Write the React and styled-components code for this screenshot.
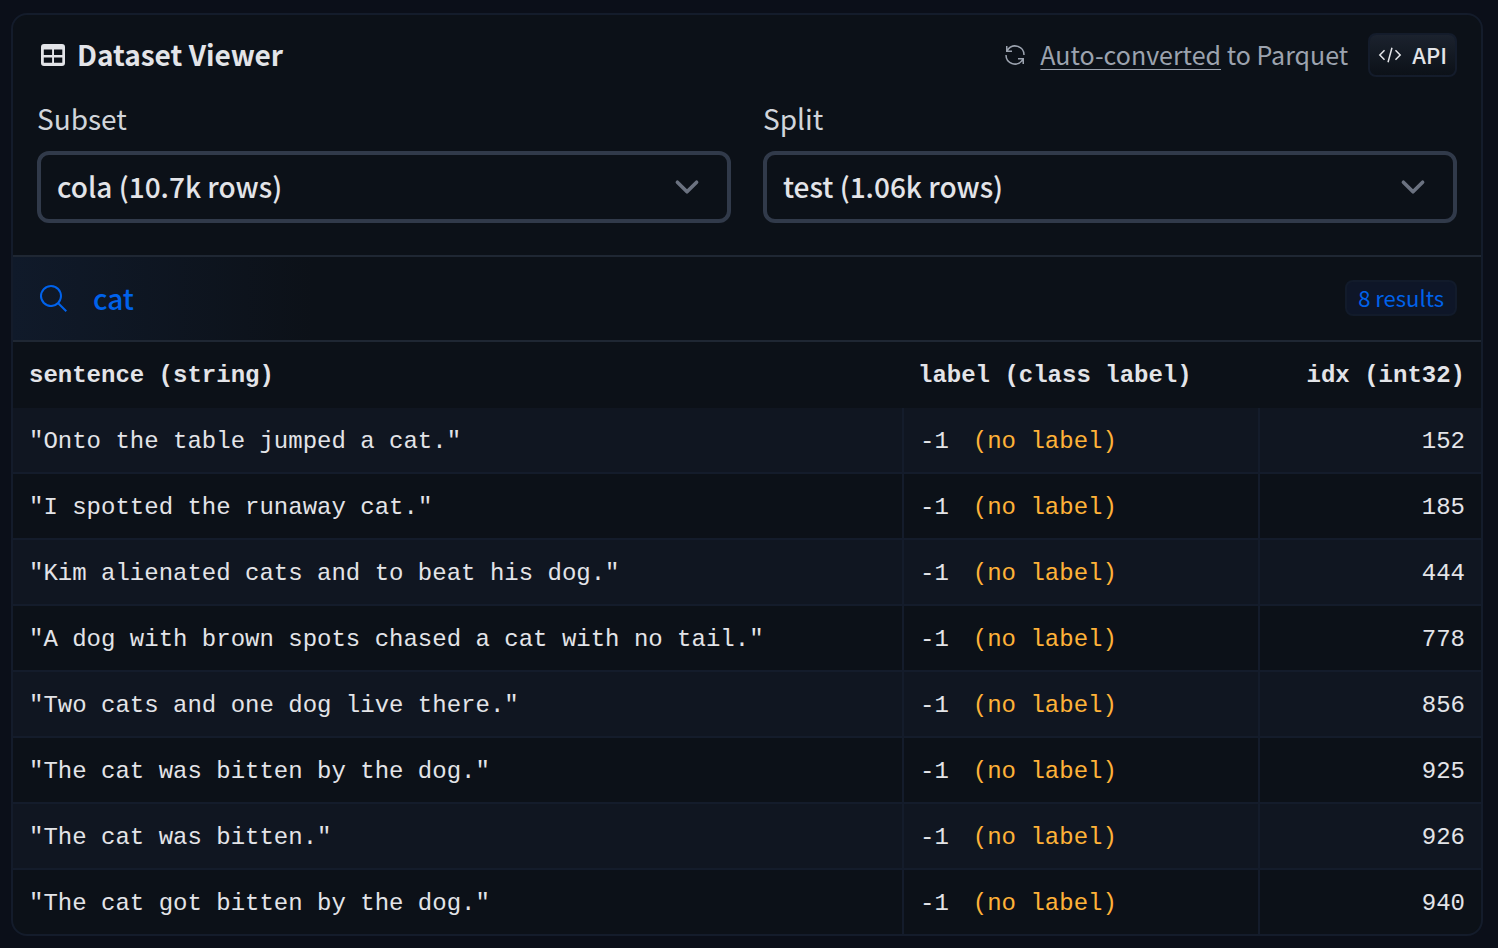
import React from "react";
import styled, { createGlobalStyle } from "styled-components";

const colors = {
    page: "#0b0f19",
    card: "#0c1118",
    stripe: "#101621",
    line: "#141c2b",
    divider: "#1f2733",
    field: "#313a4a",
    text: "#e3e4e8",
    label: "#d1d5db",
    muted: "#9ca3af",
    grey: "#6b7280",
    blue: "#0062eb",
    orange: "#ffb238"
};

const sans = `"Noto Sans CJK SC", "Open Sans", sans-serif`;
const mono = `"Liberation Mono", monospace`;

const GlobalStyle = createGlobalStyle`
    * {
        box-sizing: border-box;
    }
    body {
        margin: 0;
        background: ${colors.page};
        color: ${colors.text};
        font-family: ${sans};
    }
`;

const Card = styled.main`
    margin: 13px 15px 12px 11px;
    border: 2px solid ${colors.line};
    border-radius: 16px;
    background: ${colors.card};
    overflow: hidden;
`;
const Header = styled.header`
    display: flex;
    align-items: center;
    padding: 18px 24px 0;
    height: 62px;
`;
const HeaderText = styled.span`
    padding-bottom: 2px;
`;
const Title = styled.h1`
    display: flex;
    align-items: center;
    gap: 12px;
    margin: 0;
    padding-left: 4px;
    font-size: 28px;
    line-height: 40px;
    font-weight: 700;
`;
const Converted = styled.div`
    display: flex;
    align-items: center;
    gap: 13px;
    margin-left: auto;
    color: ${colors.muted};
    font-size: 25px;
    line-height: 40px;
`;
const ConvertedLink = styled.a`
    color: inherit;
    text-underline-offset: 4px;
    text-decoration-thickness: 1px;
`;
const ApiButton = styled.button`
    display: flex;
    align-items: center;
    gap: 10px;
    height: 44px;
    margin-left: 20px;
    padding: 0 8px;
    border: 2px solid ${colors.line};
    border-radius: 8px;
    background: linear-gradient(to bottom, #1b222e, #0c1118);
    color: ${colors.text};
    font-family: inherit;
    font-size: 22px;
    font-weight: 500;
`;

const Filters = styled.div`
    display: grid;
    grid-template-columns: 1fr 1fr;
    gap: 32px;
    padding: 21px 24px 32px;
`;
const Field = styled.label`
    display: flex;
    flex-direction: column;
    gap: 13px;
    color: ${colors.label};
    font-size: 28px;
    line-height: 40px;
`;
const SelectBox = styled.div`
    position: relative;
    svg {
        position: absolute;
        top: 12px;
        right: 20px;
        pointer-events: none;
    }
`;
const Select = styled.select`
    display: block;
    appearance: none;
    width: 100%;
    height: 72px;
    padding: 0 16px 2px;
    border: 4px solid ${colors.field};
    border-radius: 12px;
    background: ${colors.card};
    color: ${colors.text};
    font-family: inherit;
    font-size: 28px;
    font-weight: 500;
`;

const SearchBar = styled.div`
    display: flex;
    align-items: center;
    height: 87px;
    padding: 0 24px 2px;
    border-top: 2px solid ${colors.divider};
    border-bottom: 2px solid ${colors.divider};
    background: linear-gradient(to right, #101a2a, #0c1118 300px);
`;
const SearchInput = styled.input`
    flex: 1;
    min-width: 0;
    height: 48px;
    padding: 0 24px;
    border: none;
    outline: none;
    background: none;
    color: ${colors.blue};
    font-family: inherit;
    font-size: 28px;
    font-weight: 500;
`;
const Results = styled.span`
    height: 36px;
    padding: 0 11px;
    border: 2px solid #121b2b;
    border-radius: 8px;
    background: #0e1628;
    color: ${colors.blue};
    font-size: 22px;
    line-height: 30px;
`;

const Table = styled.table`
    width: 100%;
    table-layout: fixed;
    border-collapse: separate;
    border-spacing: 0;
    font-family: ${mono};
    font-size: 24px;
    line-height: 32px;
`;
const HeadCell = styled.th`
    width: ${({ $width }) => $width || "auto"};
    height: 66px;
    padding: 2px 16px 0;
    text-align: ${({ $align }) => $align || "left"};
    white-space: nowrap;
`;
const Row = styled.tr`
    &:nth-child(odd) {
        background: ${colors.stripe};
    }
    &:last-child td {
        height: 64px;
        border-bottom: none;
    }
`;
const Cell = styled.td`
    height: 66px;
    padding: 4px 16px 0;
    border-bottom: 2px solid ${colors.line};
    text-align: ${({ $align }) => $align || "left"};
    & + & {
        border-left: 2px solid ${colors.line};
    }
`;
const NoLabel = styled.span`
    margin-left: 24px;
    color: ${colors.orange};
`;

const TableIcon = () => (
    <svg width="24" height="22" viewBox="0 0 24 22" aria-hidden="true">
        <path
            fill="currentColor"
            fillRule="evenodd"
            d="M3 0h18a3 3 0 0 1 3 3v16a3 3 0 0 1-3 3H3a3 3 0 0 1-3-3V3a3 3 0 0 1 3-3zM2.8 5.5v5.5h8.3V5.5zM13 5.5v5.5h8.3V5.5zM2.8 13.5v5.3h8.3v-5.3zM13 13.5v5.3h8.3v-5.3z"
        />
    </svg>
);

const RenewIcon = () => (
    <svg width="24" height="24" viewBox="0 0 32 32" aria-hidden="true">
        <path
            fill="currentColor"
            d="M12 10H6.78A11 11 0 0 1 27 16h2A13 13 0 0 0 6 7.68V4H4v8h8zM20 22h5.22A11 11 0 0 1 5 16H3a13 13 0 0 0 23 8.32V28h2v-8h-8z"
        />
    </svg>
);

const CodeIcon = () => (
    <svg width="24" height="24" viewBox="0 0 32 32" aria-hidden="true">
        <path
            fill="currentColor"
            d="M31 16l-7 7l-1.41-1.41L28.17 16l-5.58-5.59L24 9l7 7zM1 16l7-7l1.41 1.41L3.83 16l5.58 5.59L8 23l-7-7zM12.42 25.484L17.64 6l1.932.517L14.352 26z"
        />
    </svg>
);

const SearchIcon = () => (
    <svg width="32" height="32" viewBox="0 0 32 32" aria-hidden="true">
        <path
            fill={colors.blue}
            d="M30 28.59L22.45 21A11 11 0 1 0 21 22.45L28.59 30zM5 14a9 9 0 1 1 9 9a9 9 0 0 1-9-9z"
        />
    </svg>
);

const ChevronIcon = () => (
    <svg width="48" height="48" viewBox="0 0 20 20" aria-hidden="true">
        <path
            d="M6 8l4 4 4-4"
            fill="none"
            stroke={colors.grey}
            strokeWidth="1.5"
            strokeLinecap="round"
            strokeLinejoin="round"
        />
    </svg>
);

const rows = [
    { sentence: "Onto the table jumped a cat.", idx: 152 },
    { sentence: "I spotted the runaway cat.", idx: 185 },
    { sentence: "Kim alienated cats and to beat his dog.", idx: 444 },
    { sentence: "A dog with brown spots chased a cat with no tail.", idx: 778 },
    { sentence: "Two cats and one dog live there.", idx: 856 },
    { sentence: "The cat was bitten by the dog.", idx: 925 },
    { sentence: "The cat was bitten.", idx: 926 },
    { sentence: "The cat got bitten by the dog.", idx: 940 }
];

const SelectField = ({ label, name, value }) => (
    <Field htmlFor={name}>
        {label}
        <SelectBox>
            <Select id={name} name={name}>
                <option>{value}</option>
            </Select>
            <ChevronIcon />
        </SelectBox>
    </Field>
);

const App = () => {
    return (
        <>
            <GlobalStyle />
            <Card>
                <Header>
                    <Title>
                        <TableIcon />
                        <HeaderText>Dataset Viewer</HeaderText>
                    </Title>
                    <Converted>
                        <RenewIcon />
                        <HeaderText>
                            <ConvertedLink href="#parquet">
                                Auto-converted
                            </ConvertedLink>{" "}
                            to Parquet
                        </HeaderText>
                    </Converted>
                    <ApiButton type="button">
                        <CodeIcon />
                        <HeaderText>API</HeaderText>
                    </ApiButton>
                </Header>
                <Filters>
                    <SelectField
                        label="Subset"
                        name="subset"
                        value="cola (10.7k rows)"
                    />
                    <SelectField
                        label="Split"
                        name="split"
                        value="test (1.06k rows)"
                    />
                </Filters>
                <SearchBar>
                    <SearchIcon />
                    <SearchInput
                        type="text"
                        aria-label="Search this dataset"
                        defaultValue="cat"
                    />
                    <Results>8 results</Results>
                </SearchBar>
                <Table>
                    <thead>
                        <tr>
                            <HeadCell>sentence (string)</HeadCell>
                            <HeadCell $width="356px">
                                label (class label)
                            </HeadCell>
                            <HeadCell $width="223px" $align="right">
                                idx (int32)
                            </HeadCell>
                        </tr>
                    </thead>
                    <tbody>
                        {rows.map(({ sentence, idx }) => (
                            <Row key={idx}>
                                <Cell>"{sentence}"</Cell>
                                <Cell>
                                    -1<NoLabel>(no label)</NoLabel>
                                </Cell>
                                <Cell $align="right">{idx}</Cell>
                            </Row>
                        ))}
                    </tbody>
                </Table>
            </Card>
        </>
    );
};

export default App;
